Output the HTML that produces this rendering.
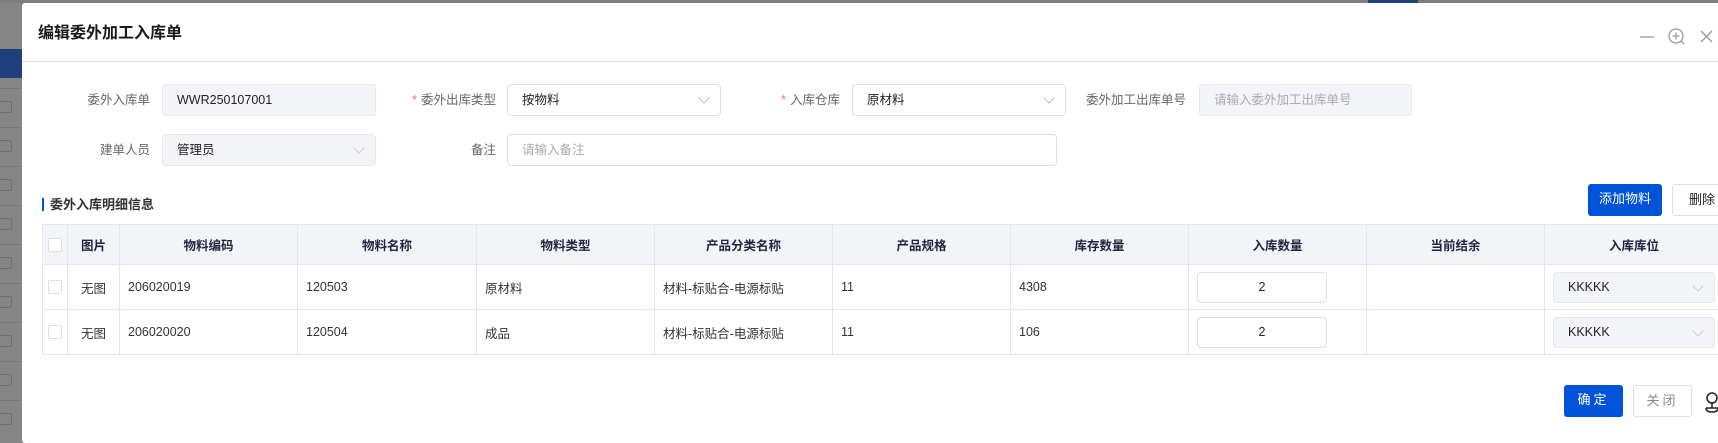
<!DOCTYPE html>
<html><head><meta charset="utf-8"><style>
*{box-sizing:border-box;margin:0;padding:0}
body{width:1718px;height:432px;overflow:hidden;background:#858585;font-family:"Liberation Sans","Noto Sans CJK SC",sans-serif;font-size:13px;color:#333;position:relative}
.dlg{position:absolute;left:22px;top:3px;width:1720px;height:440px;background:#fff;border-radius:3px}
.abs{position:absolute}
.title{left:16px;top:21px;font-size:16px;font-weight:bold;color:#1a1a1a;line-height:20px}
.hline{left:0;top:58px;width:100%;height:1px;background:#e2e4e8}
.lbl{position:absolute;line-height:32px;color:#666;text-align:right;font-size:12.5px}
.star{color:#f56c6c;margin-right:4px}
.inp{position:absolute;height:32px;border:1px solid #dcdfe6;border-radius:4px;line-height:30px;padding-left:14px;color:#222;font-size:12.5px}
.dis{background:#f3f4f8;border-color:#e4e7ed}
.ph{color:#aaa}
.arrow{position:absolute;right:12px;top:9px;width:8px;height:8px;border-right:1px solid #bbb;border-bottom:1px solid #bbb;transform:rotate(45deg)}
table{position:absolute;left:20px;top:221px;border-collapse:collapse;table-layout:fixed;font-size:12.5px}
td,th{border:1px solid #e3e6ee;height:45px;padding:0 8px;white-space:nowrap;overflow:hidden;color:#333}
th{background:#f3f4f8;height:40px;font-weight:bold;color:#1d2640;text-align:center}
.cb{display:inline-block;width:14px;height:14px;border:1px solid #dcdfe6;border-radius:2px;background:#fff;vertical-align:middle}
.btn{position:absolute;height:32px;line-height:30px;text-align:center;border-radius:3px;font-size:13px}
.bg-row{position:absolute;left:0;width:22px;height:1px;background:#777}
.bg-box{position:absolute;left:0;width:12px;height:12px;border:1px solid #6e6e6e;border-left:none;border-radius:0 2px 2px 0}
</style></head><body>
<div class="abs" style="left:0;top:0;width:1718px;height:3px;background:#7e7e7e"></div>
<div class="abs" style="left:1368px;top:0;width:50px;height:3px;background:#1f3f7a"></div>
<div class="abs" style="left:0;top:49px;width:22px;height:29px;background:#1f3f7a"></div>
<div class="bg-row" style="top:88px"></div><div class="bg-row" style="top:127px"></div><div class="bg-row" style="top:166px"></div><div class="bg-row" style="top:205px"></div><div class="bg-row" style="top:244px"></div><div class="bg-row" style="top:283px"></div><div class="bg-row" style="top:322px"></div><div class="bg-row" style="top:361px"></div><div class="bg-row" style="top:400px"></div>
<div class="bg-box" style="top:101px"></div><div class="bg-box" style="top:140px"></div><div class="bg-box" style="top:179px"></div><div class="bg-box" style="top:218px"></div><div class="bg-box" style="top:257px"></div><div class="bg-box" style="top:296px"></div><div class="bg-box" style="top:335px"></div><div class="bg-box" style="top:374px"></div><div class="bg-box" style="top:413px"></div>
<div class="dlg">
<div class="abs title">编辑委外加工入库单</div>
<svg class="abs" style="left:1615px;top:24px" width="80" height="20" viewBox="0 0 80 20">
<line x1="3" y1="10" x2="17" y2="10" stroke="#999" stroke-width="1.3"/>
<circle cx="39" cy="9" r="7" fill="none" stroke="#999" stroke-width="1.3"/><line x1="39" y1="5.5" x2="39" y2="12.5" stroke="#999" stroke-width="1.3"/><line x1="35.5" y1="9" x2="42.5" y2="9" stroke="#999" stroke-width="1.3"/><line x1="44" y1="14" x2="47" y2="17" stroke="#999" stroke-width="1.3"/>
<line x1="64" y1="4" x2="75" y2="15" stroke="#999" stroke-width="1.3"/><line x1="75" y1="4" x2="64" y2="15" stroke="#999" stroke-width="1.3"/>
</svg>
<div class="abs hline"></div>

<div class="lbl" style="left:40px;top:81px;width:88px">委外入库单</div>
<div class="inp dis" style="left:140px;top:81px;width:214px">WWR250107001</div>
<div class="lbl" style="left:340px;top:81px;width:134px"><span class="star">*</span>委外出库类型</div>
<div class="inp" style="left:485px;top:81px;width:214px">按物料<i class="arrow"></i></div>
<div class="lbl" style="left:680px;top:81px;width:138px"><span class="star">*</span>入库仓库</div>
<div class="inp" style="left:830px;top:81px;width:214px">原材料<i class="arrow"></i></div>
<div class="lbl" style="left:1030px;top:81px;width:134px">委外加工出库单号</div>
<div class="inp dis ph" style="left:1177px;top:81px;width:213px">请输入委外加工出库单号</div>

<div class="lbl" style="left:40px;top:131px;width:88px">建单人员</div>
<div class="inp dis" style="left:140px;top:131px;width:214px">管理员<i class="arrow" style="border-color:#ccc"></i></div>
<div class="lbl" style="left:380px;top:131px;width:94px">备注</div>
<div class="inp ph" style="left:485px;top:131px;width:550px">请输入备注</div>

<div class="abs" style="left:20px;top:195px;width:2px;height:13px;background:#0052d9"></div>
<div class="abs" style="left:28px;top:193px;font-weight:bold;color:#333;line-height:18px">委外入库明细信息</div>
<div class="btn" style="left:1566px;top:181px;width:74px;background:#0052d9;color:#fff">添加物料</div>
<div class="btn" style="left:1650px;top:181px;width:60px;border:1px solid #dcdfe6;color:#222">删除</div>

<table>
<colgroup><col style="width:25px"><col style="width:52px"><col style="width:178px"><col style="width:179px"><col style="width:178px"><col style="width:178px"><col style="width:178px"><col style="width:178px"><col style="width:178px"><col style="width:178px"><col style="width:178px"></colgroup>
<tr><th style="padding:0 5px"><span class="cb"></span></th><th>图片</th><th>物料编码</th><th>物料名称</th><th>物料类型</th><th>产品分类名称</th><th>产品规格</th><th>库存数量</th><th>入库数量</th><th>当前结余</th><th>入库库位</th></tr>
<tr><td style="padding:0 5px"><span class="cb"></span></td><td style="text-align:center">无图</td><td>206020019</td><td>120503</td><td>原材料</td><td>材料-标贴合-电源标贴</td><td>11</td><td>4308</td><td><div style="height:31px;border:1px solid #dcdfe6;border-radius:4px;width:130px;text-align:center;line-height:29px;color:#222">2</div></td><td></td><td><div style="position:relative;height:31px;border:1px solid #e4e7ed;background:#f3f4f8;border-radius:4px;width:162px;line-height:29px;padding-left:14px;color:#222">KKKKK<i class="arrow" style="border-color:#ccc"></i></div></td></tr>
<tr><td style="padding:0 5px"><span class="cb"></span></td><td style="text-align:center">无图</td><td>206020020</td><td>120504</td><td>成品</td><td>材料-标贴合-电源标贴</td><td>11</td><td>106</td><td><div style="height:31px;border:1px solid #dcdfe6;border-radius:4px;width:130px;text-align:center;line-height:29px;color:#222">2</div></td><td></td><td><div style="position:relative;height:31px;border:1px solid #e4e7ed;background:#f3f4f8;border-radius:4px;width:162px;line-height:29px;padding-left:14px;color:#222">KKKKK<i class="arrow" style="border-color:#ccc"></i></div></td></tr>
</table>

<div class="btn" style="left:1542px;top:382px;width:59px;background:#0052d9;color:#fff;letter-spacing:3px">确定</div>
<div class="btn" style="left:1611px;top:382px;width:59px;border:1px solid #dcdfe6;color:#888;letter-spacing:3px">关闭</div>
<svg class="abs" style="left:1682px;top:388px" width="16" height="26" viewBox="0 0 16 26"><circle cx="8" cy="7" r="5" fill="none" stroke="#222" stroke-width="1.5"/><path d="M8 12 V17 M2 17 H14 M2 17 Q2 21 8 21 Q14 21 14 17" fill="none" stroke="#222" stroke-width="1.5"/></svg>
</div>
</body></html>
